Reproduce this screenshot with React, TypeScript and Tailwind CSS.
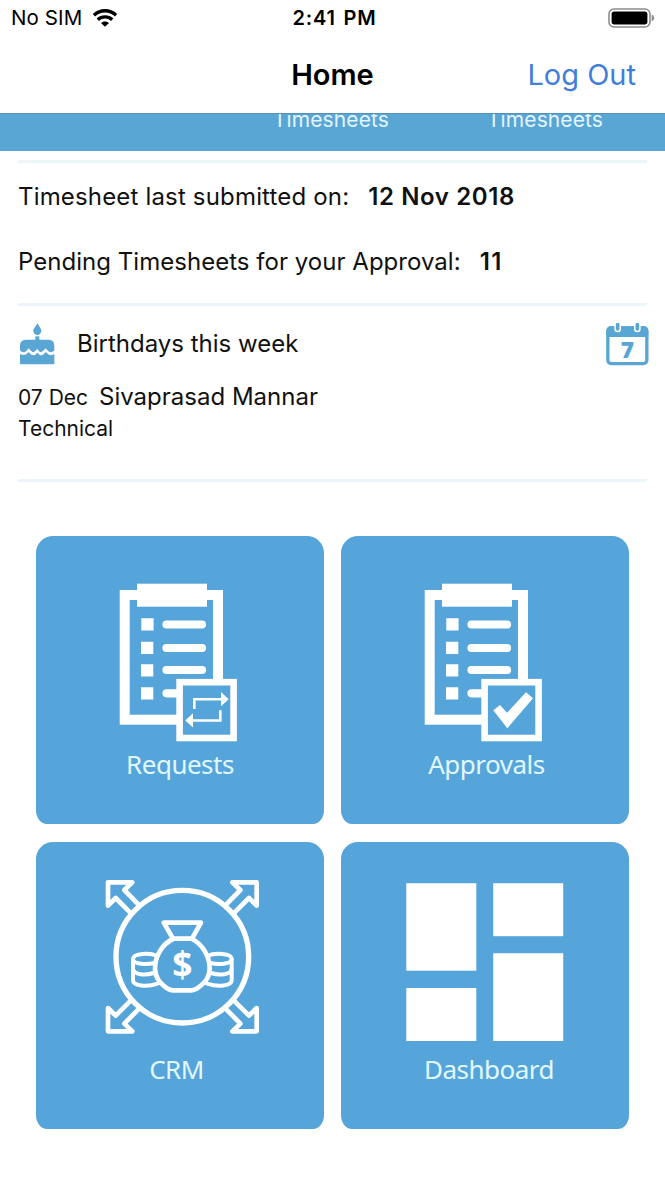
import React from 'react';

const StatusBar: React.FC = () => (
  <div className="grid grid-cols-3 items-center h-9 pl-[11px] pr-[10px] text-[20px] leading-none text-black">
    <div className="flex items-center gap-[10px]">
      <span className="text-[20.5px] tracking-[0.1px]">No SIM</span>
      <svg className="w-[26px] h-[18px]" viewBox="0 0 26 19" fill="none" stroke="black" strokeWidth="3.6">
        <path d="M1.3 6.6 C8 .2 18 .2 24.7 6.6" />
        <path d="M5.4 11.3 C9.6 7.3 16.4 7.3 20.6 11.3" />
        <path d="M8.8 14.8 C11 12.5 15 12.5 17.2 14.8 L13 18.8 Z" fill="black" stroke="none" />
      </svg>
    </div>
    <span className="text-center font-semibold tracking-[0.8px] pl-[3px] [word-spacing:2px]">2:41 PM</span>
    <svg className="justify-self-end w-[47px] h-5" viewBox="0 0 47 20">
      <rect x="1" y="1" width="41" height="18" rx="5" fill="white" stroke="#8c8c8c" strokeWidth="1.6" />
      <rect x="3.6" y="3.6" width="35.8" height="12.8" rx="2.6" fill="black" />
      <path d="M43.7 6.8 C47 7.5 47 12.5 43.7 13.2 Z" fill="#8c8c8c" />
    </svg>
  </div>
);

const Divider: React.FC = () => <div className="h-[3px] mx-[18px] bg-[#ecf5fa]" />;

const CakeIcon: React.FC = () => (
  <svg className="w-[35px] h-[42px]" viewBox="0 0 105 126" fill="#59a5d4">
    <path d="M52 1 C58 11 65 18 64 25 C63 32 58 36 52 36 C46 36 41 32 40 25 C39 18 47 11 52 1 Z" />
    <rect x="46" y="40" width="12" height="14" />
    <path d="M0 82 V68 Q0 50 18 50 H86 Q103 50 103 68 V82 C93 92 88 89 77 76 C63 91 61 91 52 77 C40 92 38 90 26 76 C16 89 10 92 0 82 Z" />
    <path d="M0 93 C12 99 18 96 26 87 C37 100 43 99 52 89 C62 100 67 99 77 87 C86 97 92 99 103 93 V124 H0 Z" />
  </svg>
);

const CalendarIcon: React.FC = () => (
  <svg className="w-[43px] h-[43px]" viewBox="0 0 129 129">
    <rect x="5.5" y="15" width="117" height="107" rx="10" fill="white" stroke="#59a5d4" strokeWidth="10" />
    <path d="M1 42 V24 Q1 10 15 10 H113 Q127 10 127 24 V42 Z" fill="#59a5d4" />
    <path d="M35 0 V18 M94 0 V18" stroke="white" strokeWidth="20" strokeLinecap="round" />
    <path d="M35 5 V18 M94 5 V18" stroke="#59a5d4" strokeWidth="11" strokeLinecap="round" />
    <text x="64" y="106" textAnchor="middle" fontSize="68" fontWeight="800" fontFamily="Open Sans, sans-serif" fill="#59a5d4">7</text>
  </svg>
);

const Clipboard: React.FC<{ children: React.ReactNode }> = ({ children }) => (
  <svg className="block w-72 h-[210px]" viewBox="0 0 288 210">
    <rect x="88.7" y="59" width="93.3" height="124.7" fill="none" stroke="white" strokeWidth="10" />
    <rect x="101" y="47.7" width="70" height="23" fill="white" />
    <path d="M105.3 82.3h12.3v12.3h-12.3z M105 105.7h12.3v12.3H105z M105 128.3h12.3v12.3H105z M105 151.3h12.3v12.3H105z" fill="white" />
    <path d="M130.5 88.5H166 M130.5 112H166 M130.5 134H166 M130.5 157.3H150" stroke="white" strokeWidth="8.2" strokeLinecap="round" />
    <rect x="143.6" y="146.2" width="54" height="55.8" fill="#55a5da" stroke="white" strokeWidth="6.6" />
    {children}
  </svg>
);

const RequestsIcon: React.FC = () => (
  <Clipboard>
    <path d="M158.3 173V163.2H186 M184.3 174.3V184.5H156" fill="none" stroke="white" strokeWidth="2.6" />
    <path d="M185 156L192.7 163.2L185 170.3Z M157 177.3L149.3 184.4L157 191.5Z" fill="white" />
  </Clipboard>
);

const ApprovalsIcon: React.FC = () => (
  <Clipboard>
    <path d="M152.3 174.3L159 169L166 176.7L185 156.3L192 162.3L166.3 192.3Z" fill="white" />
  </Clipboard>
);

const corners = ['', 'matrix(-1 0 0 1 524 0)', 'matrix(1 0 0 -1 0 521)', 'matrix(-1 0 0 -1 524 521)'];

const CrmIcon: React.FC = () => (
  <svg className="block w-72 h-[210px]" viewBox="-177 -84 864 630" fill="none" stroke="white" strokeWidth="14" strokeLinejoin="round" strokeLinecap="round">
    <circle cx="262" cy="260" r="199" strokeWidth="16" />
    {corners.map((transform) => (
      <path key={transform} transform={transform} d="M130 103 L88 60 L112 37 H39 V107 L62 84 L105 127" />
    ))}
    {['', 'matrix(-1 0 0 1 524 0)'].map((transform) => (
      <g key={transform} transform={transform} strokeWidth="12">
        <path d="M184 258 C168 248 114 249 114 267 C114 283 155 285 178 279" />
        <path d="M114 267 V331 C114 348 155 352 188 341" />
        <path d="M114 297 C117 315 150 317 176 309" />
      </g>
    ))}
    <path d="M206 158 H318 L291 206 H234 Z" />
    <path d="M234 207 C203 221 180 258 180 295 C180 323 195 337 206 347 Q222 361 236 361 H288 Q302 361 317 347 C330 336 344 323 344 295 C344 258 321 221 291 207" />
    <text x="262" y="321" textAnchor="middle" fontSize="106" fontWeight="700" fontFamily="Open Sans, sans-serif" fill="white" stroke="none">$</text>
  </svg>
);

const DashboardIcon: React.FC = () => (
  <svg className="block w-72 h-[210px]" viewBox="0 0 288 210" fill="white">
    <rect x="65.3" y="41.2" width="70" height="87.5" />
    <rect x="152.2" y="41.2" width="70" height="53" />
    <rect x="65.3" y="146" width="70" height="53" />
    <rect x="152.2" y="111.2" width="70" height="87.8" />
  </svg>
);

interface TileProps {
  icon: React.ReactNode;
  label: string;
  labelClass: string;
}

const Tile: React.FC<TileProps> = ({ icon, label, labelClass }) => (
  <button className="flex flex-col items-center h-[287.5px] bg-[#55a5da] rounded-[17px_17px_11px_11px/17px_17px_14px_14px]">
    {icon}
    <span className={`font-['Noto_Sans',sans-serif] text-[26px] tracking-[-0.5px] leading-9 text-[#e2f8ff] ${labelClass}`}>{label}</span>
  </button>
);

const App: React.FC = () => {
  return (
    <div className="w-[665px] h-[1182px] overflow-hidden bg-white text-[#111111] font-['Inter','Liberation_Sans',sans-serif]">
      <StatusBar />

      {/* Navigation */}
      <div className="grid grid-cols-3 items-center h-[77px] pr-[29px]">
        <h1 className="col-start-2 text-center text-[29px] font-semibold text-black pl-[29px]">Home</h1>
        <button className="justify-self-end text-[29px] text-[#3f7fd9]">Log Out</button>
      </div>

      {/* Scrolled banner */}
      <div className="h-[38px] bg-[#59a5d4] border-t border-[#5590b5] overflow-hidden flex justify-end gap-[98px] pr-[62px] text-[21px] leading-6 tracking-[0.1px] text-[#e2f5fd]">
        <span className="-mt-[6px]">Timesheets</span>
        <span className="-mt-[6px]">Timesheets</span>
      </div>

      <div className="pt-[9px]"><Divider /></div>

      <div className="flex flex-col gap-[29px] pl-[18px] pt-4 pb-[23px] text-[24px] leading-9">
        <p className="tracking-[0.17px]">Timesheet last submitted on:<b className="font-semibold ml-[19px] tracking-[0.6px]">12 Nov 2018</b></p>
        <p className="tracking-[0.03px]">Pending Timesheets for your Approval:<b className="font-semibold ml-[19px] tracking-[1.5px]">11</b></p>
      </div>
      <Divider />

      {/* Birthdays */}
      <div className="h-[173px] px-[18px] pt-4">
        <div className="flex items-center h-[43px] pl-[2px] -mr-[2px]">
          <CakeIcon />
          <h2 className="ml-[22px] text-[24px] flex-1">Birthdays this week</h2>
          <div className="pt-[2px]"><CalendarIcon /></div>
        </div>
        <div className="flex items-baseline gap-[11px] mt-[14px] leading-9">
          <span className="text-[21px]">07 Dec</span>
          <span className="text-[24px]">Sivaprasad Mannar</span>
        </div>
        <p className="text-[21px] leading-[26px]">Technical</p>
      </div>
      <Divider />

      {/* Menu */}
      <div className="grid grid-cols-2 gap-x-[17.5px] gap-y-[18px] w-[593.5px] ml-[35.5px] mt-[54px]">
        <Tile icon={<RequestsIcon />} label="Requests" labelClass="pl-[1px]" />
        <Tile icon={<ApprovalsIcon />} label="Approvals" labelClass="pl-[3px]" />
        <Tile icon={<CrmIcon />} label="CRM" labelClass="-mt-[1px] pr-[6px]" />
        <Tile icon={<DashboardIcon />} label="Dashboard" labelClass="-mt-[1px] pl-[8px]" />
      </div>
    </div>
  );
};

export default App;
